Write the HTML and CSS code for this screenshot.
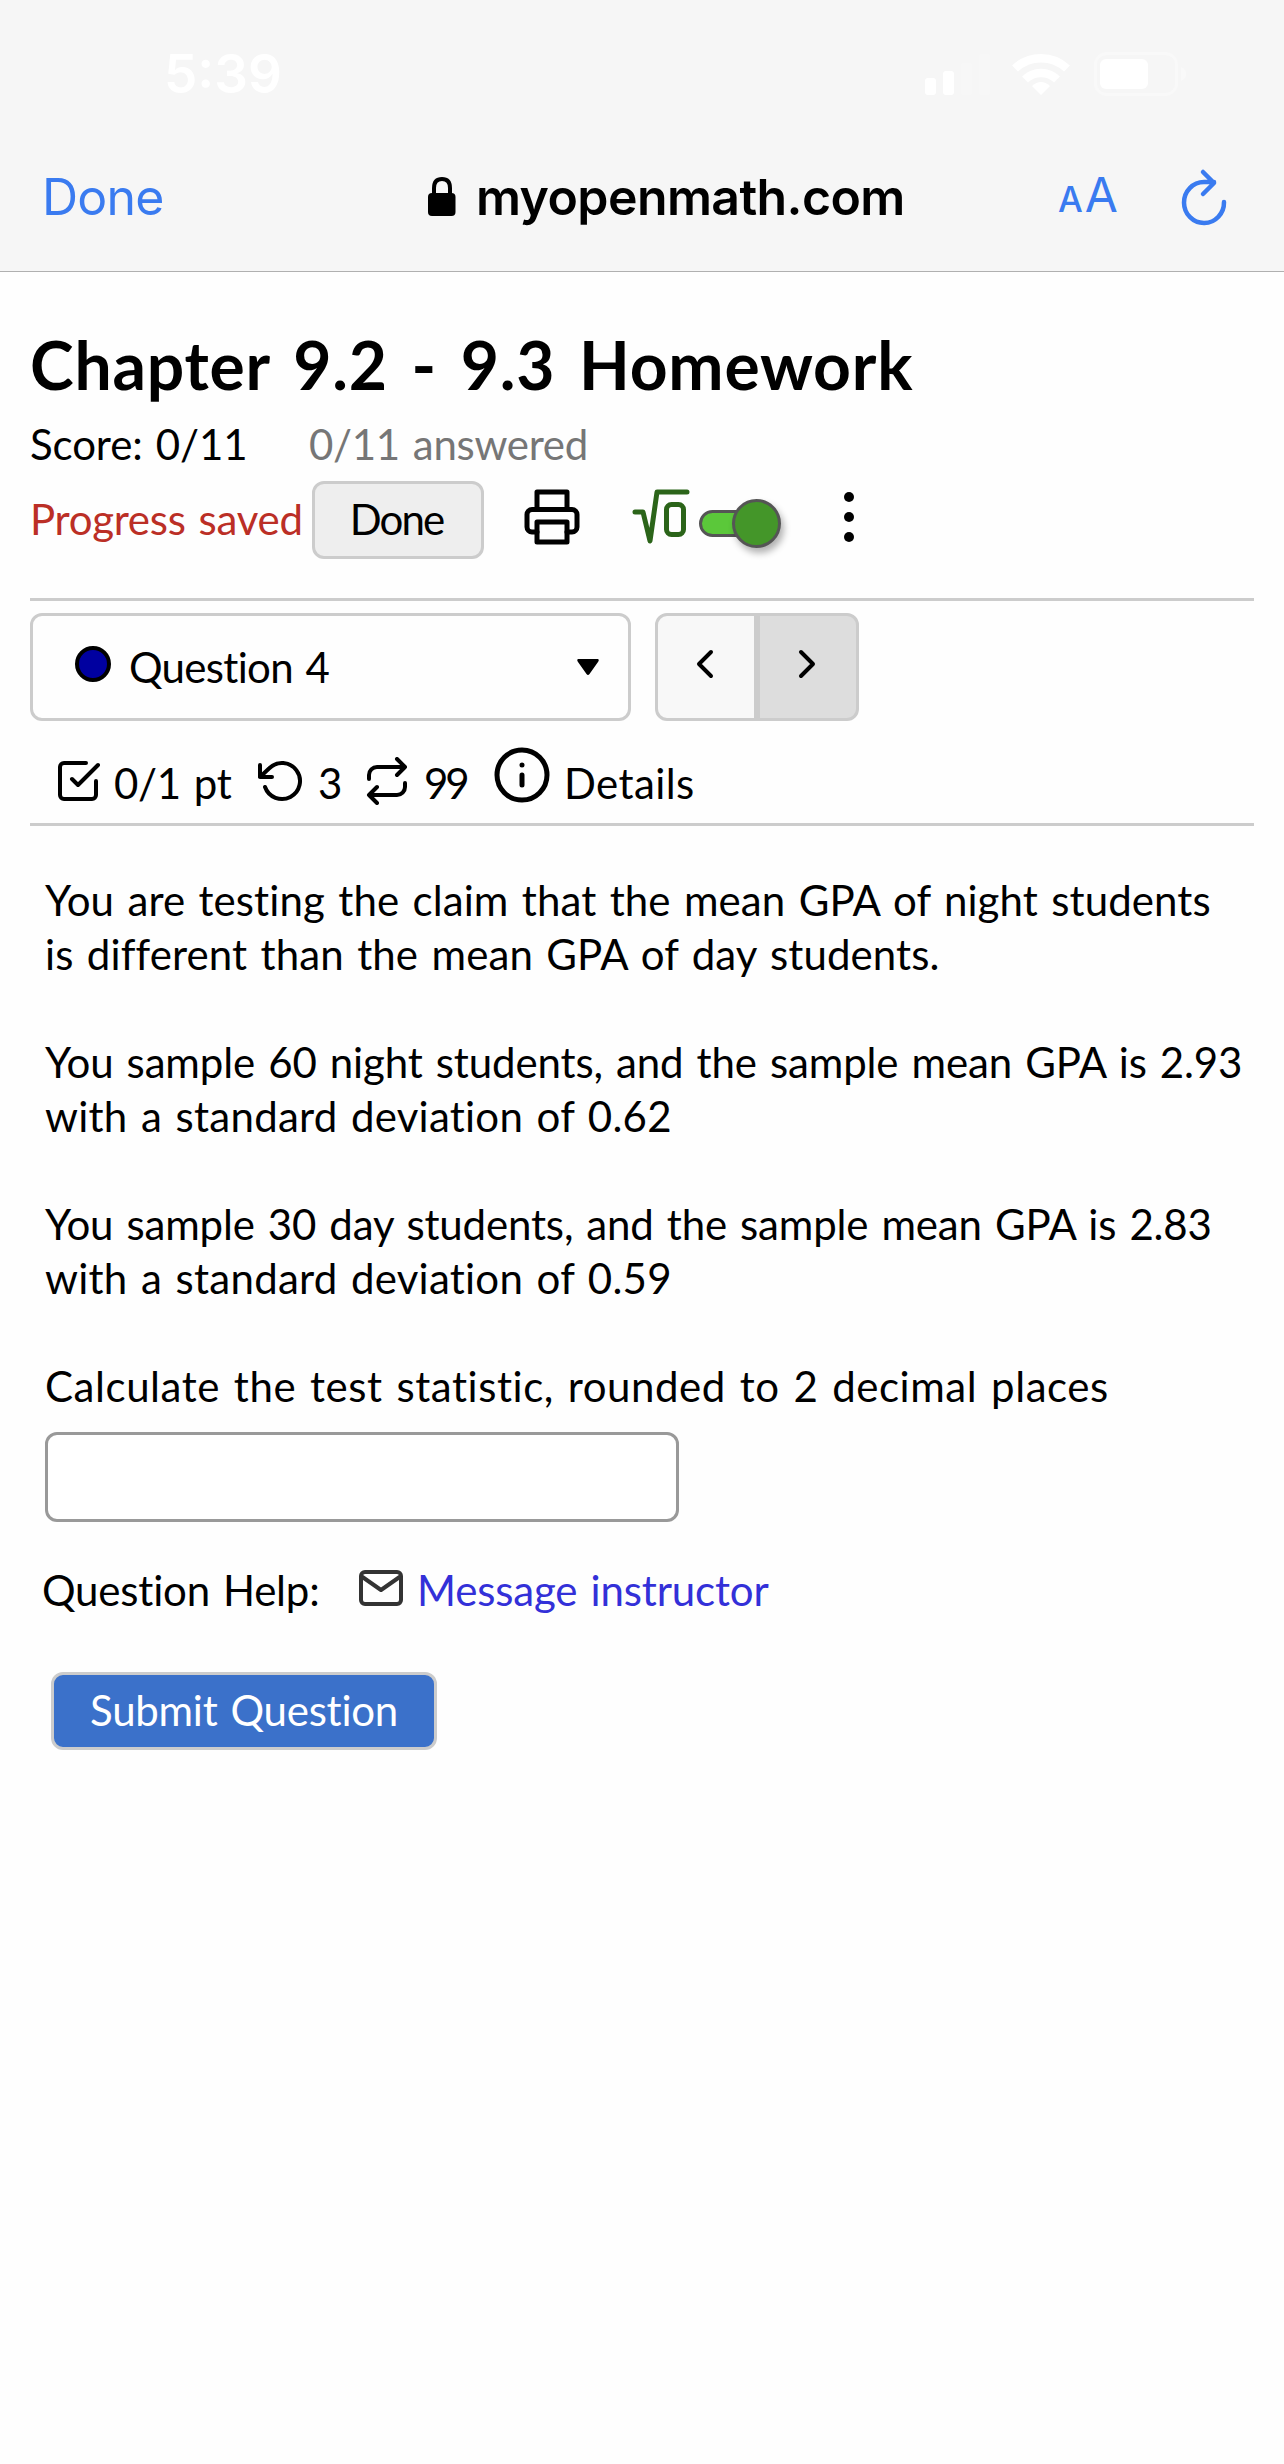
FILE: index.html
```
<!DOCTYPE html>
<html lang="en">
<head>
    <meta charset="UTF-8">
    <meta name="viewport" content="width=device-width, initial-scale=1.0">
    <title>Chapter 9.2 - 9.3 Homework</title>
    <link rel="stylesheet" href="styles.css">
</head>
<body>
    <header class="browser">
        <div class="status-bar">
            <span class="time">5:39</span>
            <svg class="signal" width="68" height="42" viewBox="0 0 68 42">
                <rect x="1" y="25" width="11" height="17" rx="3" fill="#fff"/>
                <rect x="19" y="18" width="11" height="24" rx="3" fill="#fff"/>
                <rect x="37" y="10" width="11" height="32" rx="3" fill="#f7f7f7"/>
                <rect x="55" y="1" width="11" height="41" rx="3" fill="#f7f7f7"/>
            </svg>
            <svg class="wifi" width="58" height="42" viewBox="0 0 58 42" fill="none" stroke="#fff">
                <path d="M3 15.5A38 38 0 0 1 55 15.5" stroke-width="8.5"/>
                <path d="M13 26.5A23 23 0 0 1 45 26.5" stroke-width="8.5"/>
                <path d="M20 33Q29 25 38 33L29 42Z" fill="#fff" stroke="none"/>
            </svg>
            <svg class="battery" width="94" height="44" viewBox="0 0 94 44">
                <rect x="1.5" y="1.5" width="81" height="41" rx="11" fill="none" stroke="#f9f9f9" stroke-width="3"/>
                <rect x="6" y="7" width="48" height="30" rx="6" fill="#fff"/>
                <path d="M87 15Q92 17 92 22T87 29Z" fill="#f9f9f9"/>
            </svg>
        </div>
        <div class="address-bar">
            <a class="close">Done</a>
            <svg class="lock" width="28" height="40" viewBox="0 0 28 40">
                <path d="M6 19V11Q6 2 14 2T22 11V19" fill="none" stroke="#000" stroke-width="4"/>
                <rect x="0" y="16" width="27.5" height="23" rx="4"/>
            </svg>
            <span class="domain">myopenmath.com</span>
            <span class="text-size"><small>A</small>A</span>
            <svg class="reload" width="48" height="58" viewBox="0 0 48 58">
                <path d="M44 34A20 20.5 0 1 1 24 14H34M23 4L34 15L23 26"/>
            </svg>
        </div>
    </header>

    <main>
        <h1>Chapter 9.2 - 9.3 Homework</h1>
        <div class="score">
            <span class="total">Score: 0/11</span>
            <span class="answered">0/11 answered</span>
        </div>
        <div class="tools">
            <span class="saved">Progress saved</span>
            <button class="done">Done</button>
            <svg class="icon print" width="60" height="60" viewBox="0 0 24 24">
                <path d="M6 9V2h12v7M6 18H4a2 2 0 0 1-2-2v-5a2 2 0 0 1 2-2h16a2 2 0 0 1 2 2v5a2 2 0 0 1-2 2h-2"/>
                <path d="M6 14h12v8H6z"/>
            </svg>
            <svg class="icon root" width="60" height="60" viewBox="0 0 60 60">
                <path d="M4 25H12L19 54L26 5H56"/>
                <rect x="35.5" y="17.5" width="17" height="30" rx="5"/>
            </svg>
            <span class="toggle"><span class="knob"></span></span>
            <svg class="more" width="10" height="50" viewBox="0 0 10 50">
                <circle cx="5" cy="5" r="5"/><circle cx="5" cy="25" r="5"/><circle cx="5" cy="45" r="5"/>
            </svg>
        </div>

        <nav>
            <div class="picker">
                <span class="status"></span>
                <span class="current">Question 4</span>
                <svg width="22" height="16" viewBox="0 0 22 16"><path d="M1 0H21Q22.5 1 21 3L12.5 15Q11 17 9.5 15L1 3Q-.5 1 1 0Z"/></svg>
            </div>
            <div class="pager">
                <button class="prev"><svg class="icon" width="48" height="48" viewBox="0 0 24 24"><path d="M15 18l-6-6 6-6"/></svg></button>
                <button class="next"><svg class="icon" width="48" height="48" viewBox="0 0 24 24"><path d="M9 18l6-6-6-6"/></svg></button>
            </div>
        </nav>

        <div class="meta">
            <svg class="icon" width="48" height="48" viewBox="0 0 24 24"><path d="M9 11l3 3L22 4M21 12v7a2 2 0 0 1-2 2H5a2 2 0 0 1-2-2V5a2 2 0 0 1 2-2h11"/></svg>
            <span class="points">0/1 pt</span>
            <svg class="icon" width="48" height="48" viewBox="0 0 24 24"><path d="M1 4v6h6M3.51 15a9 9 0 1 0 2.13-9.36L1 10"/></svg>
            <span class="tries">3</span>
            <svg class="icon" width="48" height="48" viewBox="0 0 24 24"><path d="M17 1l4 4-4 4M3 11V9a4 4 0 0 1 4-4h14M7 23l-4-4 4-4M21 13v2a4 4 0 0 1-4 4H3"/></svg>
            <span class="versions">99</span>
            <svg class="icon info" width="60" height="60" viewBox="0 0 24 24"><circle cx="12" cy="12" r="10"/><path d="M12 16v-4M12 8h.01"/></svg>
            <span class="details">Details</span>
        </div>

        <section class="question">
            <p>
                <span class="l1">You are testing the claim that the mean GPA of night students</span>
                <span class="l2">is different than the mean GPA of day students.</span>
            </p>
            <p>
                <span class="l3">You sample 60 night students, and the sample mean GPA is 2.93</span>
                <span class="l4">with a standard deviation of 0.62</span>
            </p>
            <p>
                <span class="l5">You sample 30 day students, and the sample mean GPA is 2.83</span>
                <span class="l4">with a standard deviation of 0.59</span>
            </p>
            <p>
                <span class="l6">Calculate the test statistic, rounded to 2 decimal places</span>
            </p>
            <input type="text" class="answer">
        </section>

        <div class="help">
            <span class="label">Question Help:</span>
            <svg class="icon mail" width="48" height="48" viewBox="0 0 24 24"><path d="M4 4h16a2 2 0 0 1 2 2v12a2 2 0 0 1-2 2H4a2 2 0 0 1-2-2V6a2 2 0 0 1 2-2zM22 6l-10 7L2 6"/></svg>
            <a>Message instructor</a>
        </div>
        <button class="submit">Submit Question</button>
    </main>
</body>
</html>
```
FILE: styles.css
```
* {
    box-sizing: border-box;
}
body {
    margin: 0;
    min-height: 2464px;
    background: #fefefe;
    color: #000;
    font-family: "Lato", "Open Sans", sans-serif;
    font-size: 42px;
    line-height: 54px;
    word-spacing: 2.5px;
    white-space: nowrap;
}
svg {
    display: block;
    flex: none;
}
button {
    font: inherit;
    word-spacing: inherit;
    color: inherit;
    padding: 0;
    border: 3px solid #ccc;
}

/* browser chrome */
.browser {
    height: 272px;
    background: #f6f6f6;
    border-bottom: 1px solid #b0b0b0;
    font-family: "Inter", sans-serif;
}
.status-bar {
    display: flex;
    align-items: center;
    height: 148px;
    padding-left: 164px;
}
.time {
    width: 760px;
    font-size: 53px;
    font-weight: 600;
    color: #fff;
}
.wifi {
    margin-left: 20px;
}
.battery {
    margin-left: 24px;
}
.address-bar {
    display: flex;
    align-items: center;
    height: 98px;
    padding-left: 42px;
    font-size: 50px;
    color: #3a7bf0;
}
.close {
    width: 386px;
    letter-spacing: -0.8px;
}
.domain {
    width: 582px;
    margin-left: 20px;
    color: #000;
    font-weight: 600;
    letter-spacing: -0.6px;
}
.text-size {
    width: 122px;
    font-size: 48px;
}
.text-size small {
    font-size: 35px;
    margin-right: 2px;
    font-weight: 500;
}
.reload {
    fill: none;
    stroke: #3a7bf0;
    stroke-width: 4.5;
    stroke-linecap: round;
    stroke-linejoin: round;
}

/* assignment header */
main {
    padding: 54px 30px 0;
}
h1 {
    margin: 0;
    font-size: 66px;
    font-weight: 700;
    line-height: 78px;
    letter-spacing: 0.76px;
    word-spacing: 7px;
}
.score {
    display: flex;
    margin-top: 13px;
}
.total {
    width: 279px;
    letter-spacing: -0.1px;
}
.answered {
    color: #767676;
    letter-spacing: -0.3px;
}
.tools {
    display: flex;
    align-items: center;
    height: 78px;
    margin: 10px 0 39px;
}
.saved {
    width: 282px;
    padding-bottom: 2px;
    color: #bb2f26;
    letter-spacing: -0.27px;
}
.done {
    width: 172px;
    height: 78px;
    padding: 0 3px 2px 0;
    border-radius: 12px;
    background: #eee;
    letter-spacing: -1.9px;
}
.icon {
    fill: none;
    stroke: #000;
    stroke-width: 2;
    stroke-linecap: round;
    stroke-linejoin: round;
}
.print {
    margin: 0 0 6px 38px;
}
.root {
    margin: 0 0 6px 49px;
    stroke: #2b6419;
    stroke-width: 5;
}
.toggle {
    display: flex;
    align-items: center;
    width: 80px;
    height: 27px;
    margin: 7px 0 0 8px;
    border: 3px solid #555;
    border-radius: 14px;
    background: #5bc83a;
}
.knob {
    flex: none;
    width: 49px;
    height: 49px;
    margin-left: 30px;
    border: 3px solid #555;
    border-radius: 50%;
    background: #449629;
    box-shadow: 3px 5px 7px rgba(0, 0, 0, 0.3);
}
.more {
    margin: 0 0 6px 65px;
}

/* question navigation */
nav {
    display: flex;
    height: 123px;
    padding-top: 12px;
    border-top: 3px solid #ccc;
}
.picker {
    display: flex;
    align-items: center;
    width: 601px;
    border: 3px solid #ccc;
    border-radius: 12px;
    padding: 0 29px 0 42px;
}
.status {
    width: 36px;
    height: 36px;
    margin: 0 18px 7px 0;
    border: 4px solid #000;
    border-radius: 50%;
    background: #0000a0;
}
.current {
    width: 448px;
    letter-spacing: -0.7px;
}
.pager {
    display: flex;
    margin-left: 24px;
}
.pager button {
    display: flex;
    justify-content: center;
    width: 102px;
    padding: 24px 2px 0 0;
}
.pager .prev {
    border-radius: 12px 0 0 12px;
    background: #f8f8f8;
}
.pager .next {
    border-radius: 0 12px 12px 0;
    background: #ddd;
}
.meta {
    display: flex;
    align-items: flex-start;
    height: 105px;
    padding: 35px 0 0 24px;
    border-bottom: 3px solid #ccc;
}
.meta .icon {
    margin-top: 1px;
}
.meta .info {
    margin-top: -11px;
}
.points {
    width: 144px;
    margin-left: 12px;
    letter-spacing: -0.3px;
}
.tries {
    width: 45px;
    margin-left: 12px;
    letter-spacing: -1px;
}
.versions {
    width: 68px;
    margin-left: 13px;
    letter-spacing: -3px;
}
.details {
    margin-left: 12px;
    letter-spacing: 0.4px;
}

/* question text, one letter-spacing per line */
.question {
    padding: 47px 0 0 15px;
}
.question p {
    margin: 0 0 54px;
}
.question p span {
    display: block;
}
.l1 { letter-spacing: 0.09px; }
.l2 { letter-spacing: 0.11px; }
.l3 { letter-spacing: -0.13px; }
.l4 { letter-spacing: 0.24px; }
.l5 { letter-spacing: -0.16px; }
.l6 { letter-spacing: 0.56px; }
.question p:last-of-type {
    margin-bottom: 19px;
}
.answer {
    display: block;
    width: 634px;
    height: 90px;
    border: 3px solid #999;
    border-radius: 12px;
    background: #fff;
    font: inherit;
}
.help {
    display: flex;
    margin: 41px 0 55px 12px;
}
.label {
    width: 315px;
    letter-spacing: -0.2px;
}
.mail {
    margin-top: 1px;
    stroke: #333;
}
.help a {
    margin-left: 12px;
    color: #3330d8;
    letter-spacing: -0.15px;
}
.submit {
    display: block;
    width: 386px;
    height: 78px;
    margin-left: 21px;
    padding-bottom: 2px;
    border-radius: 12px;
    background: #3b71ca;
    color: #fff;
    letter-spacing: -0.25px;
}
```
